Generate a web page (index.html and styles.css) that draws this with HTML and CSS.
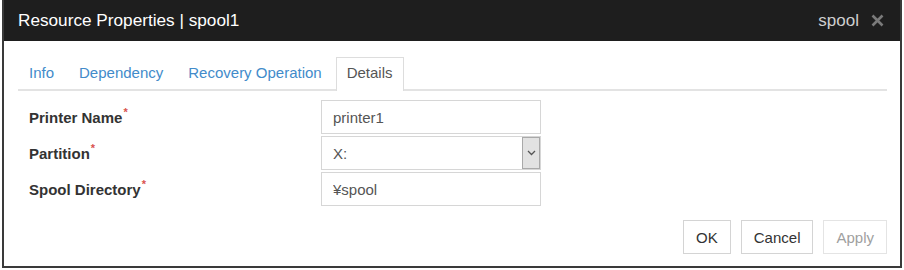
FILE: index.html
```html
<!DOCTYPE html>
<html lang="en">
<head>
    <meta charset="UTF-8">
    <title>Resource Properties | spool1</title>
    <link rel="stylesheet" href="styles.css">
</head>
<body>
    <div class="dialog">
        <div class="titlebar">
            <span class="title">Resource Properties | spool1</span>
            <span class="type">spool</span>
            <svg class="close" width="13" height="13" viewBox="0 0 13 13">
                <path d="M1.5 1.5 L11.5 11.5 M11.5 1.5 L1.5 11.5" stroke="#7a7a7a" stroke-width="2.6" fill="none"/>
            </svg>
        </div>

        <div class="content">
            <ul class="tabs">
                <li class="tab">Info</li>
                <li class="tab">Dependency</li>
                <li class="tab">Recovery Operation</li>
                <li class="tab active">Details</li>
            </ul>

            <div class="form">
                <label class="label">Printer Name<span class="req">*</span></label>
                <input class="field" type="text" value="printer1">

                <label class="label">Partition<span class="req">*</span></label>
                <div class="field select">
                    <span class="value">X:</span>
                    <span class="arrow">
                        <svg width="9" height="6" viewBox="0 0 9 6">
                            <path d="M1 1 L4.5 4.5 L8 1" stroke="#555" stroke-width="1.3" fill="none"/>
                        </svg>
                    </span>
                </div>

                <label class="label">Spool Directory<span class="req">*</span></label>
                <input class="field" type="text" value="¥spool">
            </div>

            <div class="buttons">
                <button class="btn">OK</button>
                <button class="btn">Cancel</button>
                <button class="btn disabled">Apply</button>
            </div>
        </div>
    </div>
</body>
</html>
```

FILE: styles.css
```css
body {
    margin: 0;
    background-color: #fff;
    font-family: "Liberation Sans", Arial, sans-serif;
    color: #333;
}

.dialog {
    width: 896px;
    margin-left: 2px;
    border: 2px solid #3a3a3a;
    border-top: none;
    background-color: #fff;
}

.titlebar {
    display: flex;
    align-items: center;
    height: 41px;
    padding: 0 16px 0 14px;
    background-color: #1e1e1e;
    font-size: 17px;
}

.title {
    color: #fff;
    flex: 1;
    font-size: 17.2px;
}

.type {
    color: #cfcfcf;
    margin-right: 12px;
}

.close {
    display: block;
}

.content {
    padding: 16px 13px 12px 14px;
}

.tabs {
    display: flex;
    margin: 0;
    padding: 0;
    list-style: none;
    border-bottom: 2px solid #e3e3e3;
}

.tab {
    height: 31px;
    line-height: 30px;
    padding: 0 10px;
    margin-right: 3px;
    border: 1px solid transparent;
    border-bottom: none;
    font-size: 15px;
    color: #428bca;
}

.tab.active {
    color: #555;
    border-color: #ddd;
    background-color: #fff;
    margin-bottom: -2px;
    height: 33px;
}

.form {
    display: grid;
    grid-template-columns: 292px 220px;
    grid-auto-rows: 34px;
    row-gap: 2px;
    align-items: center;
    margin-top: 9px;
    padding-left: 11px;
}

.label {
    font-size: 15px;
    font-weight: bold;
    color: #333;
}

.req {
    color: #d9534f;
    font-size: 11px;
    vertical-align: top;
    position: relative;
    top: -3px;
    margin-left: 1px;
}

.field {
    box-sizing: border-box;
    height: 34px;
    width: 220px;
    margin: 0;
    padding: 0 11px;
    border: 1px solid #d6d6d6;
    font-family: inherit;
    font-size: 15px;
    color: #555;
    background-color: #fff;
}

.select {
    display: flex;
    align-items: center;
    padding-right: 0;
}

.select .value {
    flex: 1;
}

.arrow {
    box-sizing: border-box;
    display: flex;
    align-items: center;
    justify-content: center;
    width: 18px;
    height: 32px;
    background-color: #e2e2e2;
    border: 1px solid #a9a9a9;
}

.buttons {
    display: flex;
    justify-content: flex-end;
    gap: 10px;
    margin-top: 14px;
}

.btn {
    height: 34px;
    padding: 0 12px;
    border: 1px solid #d4d4d4;
    background-color: #fff;
    font-family: inherit;
    font-size: 15px;
    color: #333;
}

.btn.disabled {
    color: #a0a0a0;
    border-color: #e4e4e4;
}
```
